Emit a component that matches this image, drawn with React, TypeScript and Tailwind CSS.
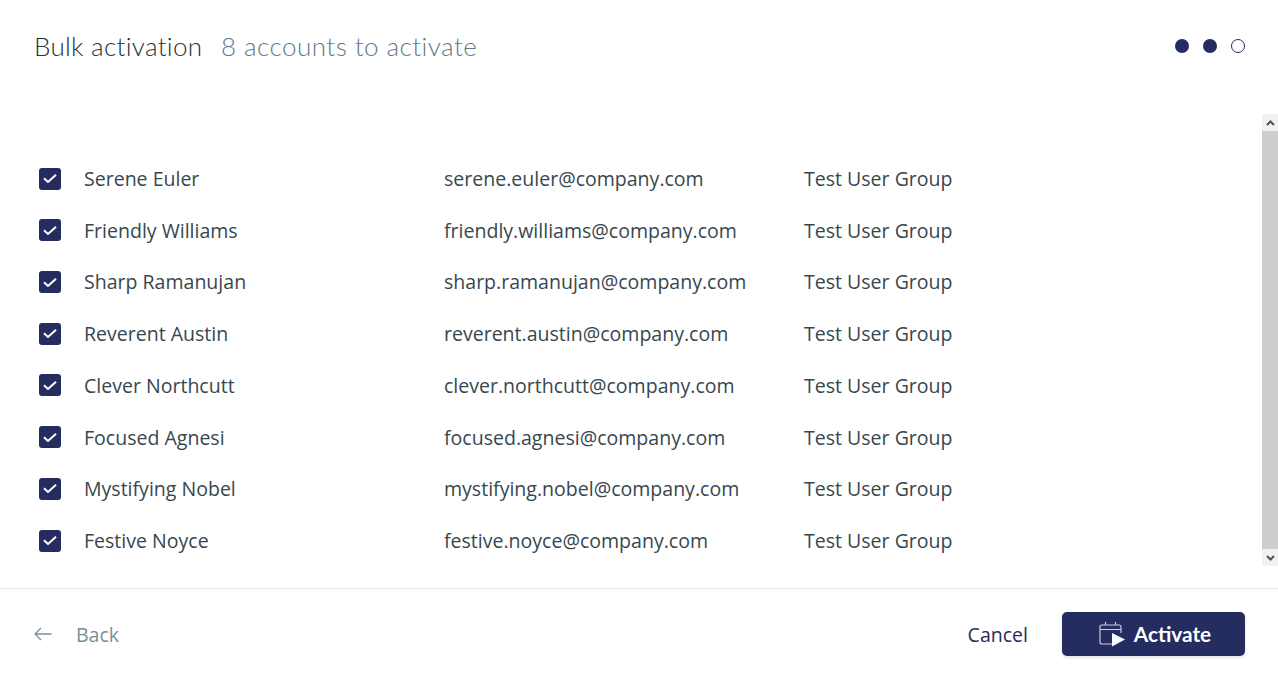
import React from "react";

const accounts = [
  ["Serene Euler", "serene.euler@company.com"],
  ["Friendly Williams", "friendly.williams@company.com"],
  ["Sharp Ramanujan", "sharp.ramanujan@company.com"],
  ["Reverent Austin", "reverent.austin@company.com"],
  ["Clever Northcutt", "clever.northcutt@company.com"],
  ["Focused Agnesi", "focused.agnesi@company.com"],
  ["Mystifying Nobel", "mystifying.nobel@company.com"],
  ["Festive Noyce", "festive.noyce@company.com"],
];

const App: React.FC = () => {
  return (
    <div className="h-[679px] w-full bg-white flex flex-col font-['Open_Sans',sans-serif] overflow-hidden">
      {/* Header */}
      <div className="h-[114px] shrink-0 flex items-start justify-between pl-[34px] pr-[33px] pt-[29px]">
        <div className="flex items-baseline font-['Lato',sans-serif] font-light text-[26px] leading-[34px]">
          <span className="text-[#263238] w-[187px] tracking-[0.3px]">Bulk activation</span>
          <span className="text-[#5f7a88] tracking-[0.45px]">8 accounts to activate</span>
        </div>
        <div className="flex items-center gap-[14px] mt-[10px]">
          <span className="w-[14px] h-[14px] rounded-full bg-[#252c60]"></span>
          <span className="w-[14px] h-[14px] rounded-full bg-[#252c60]"></span>
          <span className="w-[14px] h-[14px] rounded-full border border-[#252c60]"></span>
        </div>
      </div>

      {/* List */}
      <div className="h-[452px] shrink-0 flex">
        <div className="flex-1 pt-[38.9px] pl-[39px]">
          {accounts.map(([name, email]) => (
            <div key={email} className="h-[51.7px] flex items-center text-[19.55px] text-[#37474f]">
              <span className="w-[22px] h-[22px] rounded-[3px] bg-[#252c60] flex items-center justify-center mr-[23px]">
                <svg width="14" height="9" viewBox="0 0 14 9" fill="none">
                  <path d="M1 4.2 L5 8 L13 0.8" stroke="#ffffff" strokeWidth="2" />
                </svg>
              </span>
              <span className="w-[360px]">{name}</span>
              <span className="w-[360px]">{email}</span>
              <span>Test User Group</span>
            </div>
          ))}
        </div>
        <div className="w-[16px] shrink-0 flex flex-col bg-[#f1f1f1]">
          <div className="h-[17px] flex items-center justify-center">
            <svg width="9" height="6" viewBox="0 0 9 6" fill="none">
              <path d="M1 5 L4.5 1.5 L8 5" stroke="#505050" strokeWidth="2" />
            </svg>
          </div>
          <div className="flex-1 bg-[#cdcdcd]"></div>
          <div className="h-[17px] flex items-center justify-center">
            <svg width="9" height="6" viewBox="0 0 9 6" fill="none">
              <path d="M1 1 L4.5 4.5 L8 1" stroke="#505050" strokeWidth="2" />
            </svg>
          </div>
        </div>
      </div>

      {/* Footer */}
      <div className="mt-[22px] border-t border-[#e3e3e8] flex-1 flex items-start justify-between pl-[34px] pr-[33px] pt-[23px]">
        <div className="flex items-center h-[46px] text-[19.55px] text-[#78909c]">
          <svg width="18" height="14" viewBox="0 0 18 14" fill="none" className="mr-[24px] -mt-[3px]">
            <path d="M17.5 7 H1 M7 1 L1 7 L7 13" stroke="#78909c" strokeWidth="1.3" />
          </svg>
          <span>Back</span>
        </div>
        <div className="flex items-center">
          <span className="text-[19.55px] text-[#252c60] mr-[34px] mt-[2px]">Cancel</span>
          <button className="w-[183px] h-[44px] pl-[3px] rounded-[5px] bg-[#252c60] shadow-[0_2px_3px_rgba(37,44,96,0.12)] flex items-center justify-center text-white font-['Lato',sans-serif] font-bold text-[20.8px]">
            <svg width="28" height="27" viewBox="0 0 28 27" fill="none" className="mr-[7px]">
              <path d="M14.5 23 H3 Q1 23 1 21 V6 Q1 4 3 4 H20 Q22 4 22 6 V12 M1 8.5 H22 M6.5 1 V4 M16.5 1 V4" stroke="#c9cbe0" strokeWidth="1.2" />
              <path d="M13 12 L26 18.5 L13 25.5 Z" fill="#ffffff" />
            </svg>
            Activate
          </button>
        </div>
      </div>
    </div>
  );
};

export default App;
